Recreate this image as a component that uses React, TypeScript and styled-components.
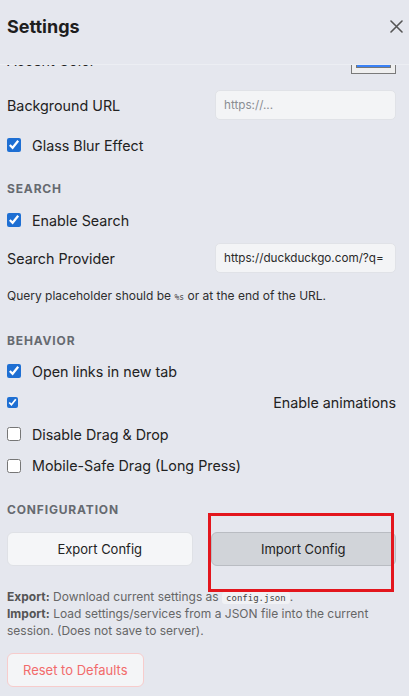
import React, { useLayoutEffect, useRef } from "react";
import styled, { createGlobalStyle, css } from "styled-components";

const GlobalStyle = createGlobalStyle`
  html, body {
    margin: 0;
    padding: 0;
    background: #e5e7ee;
  }
  body {
    font-family: Inter, "Noto Sans", "Liberation Sans", sans-serif;
    color: #222;
  }
  * {
    box-sizing: border-box;
  }
`;

function App() {
  const bodyRef = useRef<HTMLDivElement>(null);
  const accentRef = useRef<HTMLDivElement>(null);

  // panel is scrolled so that the accent row sits half under the header
  useLayoutEffect(() => {
    if (bodyRef.current && accentRef.current) {
      bodyRef.current.scrollTop = accentRef.current.offsetTop + 20;
    }
  }, []);

  return (
    <React.Fragment>
      <GlobalStyle />
      <Panel>
        <Header>
          <Title>Settings</Title>
          <CloseButton aria-label="Close">
            <svg width="13" height="13" viewBox="0 0 13 13">
              <path d="M1 1L12 12M12 1L1 12" stroke="#555" strokeWidth="1.6" strokeLinecap="round" />
            </svg>
          </CloseButton>
        </Header>
        <Body ref={bodyRef}>
          <Section $gap={15}>
            <SectionTitle>Appearance</SectionTitle>
            <FieldRow>
              <Label>Theme</Label>
              <TextInput defaultValue="Auto" readOnly />
            </FieldRow>
            <FieldRow ref={accentRef}>
              <Label>Accent Color</Label>
              <ColorInput type="color" defaultValue="#3b82f6" />
            </FieldRow>
            <FieldRow>
              <Label>Background URL</Label>
              <TextInput placeholder="https://..." />
            </FieldRow>
            <CheckRow>
              <Checkbox type="checkbox" defaultChecked />
              <span>Glass Blur Effect</span>
            </CheckRow>
          </Section>

          <Section $gap={13}>
            <SectionTitle>Search</SectionTitle>
            <CheckRow>
              <Checkbox type="checkbox" defaultChecked />
              <span>Enable Search</span>
            </CheckRow>
            <FieldRow>
              <Label>Search Provider</Label>
              <TextInput defaultValue="https://duckduckgo.com/?q=" />
            </FieldRow>
            <Hint>
              Query placeholder should be <Code $tiny>%s</Code> or at the end of the URL.
            </Hint>
          </Section>

          <Section $gap={12.5} $top={1}>
            <SectionTitle>Behavior</SectionTitle>
            <CheckRow $h={19}>
              <Checkbox type="checkbox" defaultChecked />
              <span>Open links in new tab</span>
            </CheckRow>
            <CheckRow $h={19} $spread>
              <Checkbox type="checkbox" defaultChecked $small />
              <span>Enable animations</span>
            </CheckRow>
            <CheckRow $h={19}>
              <Checkbox type="checkbox" />
              <span>Disable Drag &amp; Drop</span>
            </CheckRow>
            <CheckRow $h={19}>
              <Checkbox type="checkbox" />
              <span>Mobile-Safe Drag (Long Press)</span>
            </CheckRow>
          </Section>

          <Section $top={1}>
            <SectionTitle>Configuration</SectionTitle>
            <ButtonGrid>
              <Button>Export Config</Button>
              <Button $pressed>Import Config</Button>
            </ButtonGrid>
            <ConfigNote>
              <strong>Export:</strong> Download current settings as <Code>config.json</Code>.
              <br />
              <strong>Import:</strong> Load settings/services from a JSON file into the current
              session. (Does not save to server).
            </ConfigNote>
            <div>
              <Button $danger>Reset to Defaults</Button>
            </div>
          </Section>
        </Body>
      </Panel>
      <Highlight />
    </React.Fragment>
  );
}

export default App;

const Panel = styled.div`
  width: 409px;
  height: 696px;
  display: flex;
  flex-direction: column;
  background: #e5e7ee;
`;

const Header = styled.div`
  height: 65px;
  flex-shrink: 0;
  display: flex;
  align-items: flex-start;
  justify-content: space-between;
  padding: 17px 6px 0 7px;
  border-bottom: 1px solid #eceef3;
`;

const Title = styled.h2`
  margin: 0;
  font-size: 18px;
  line-height: 20px;
  font-weight: 700;
  color: #1e1e1e;
`;

const CloseButton = styled.button`
  border: none;
  background: transparent;
  padding: 0;
  width: 13px;
  height: 13px;
  margin-top: 3px;
  display: flex;
  cursor: pointer;
`;

const Body = styled.div`
  position: relative;
  flex: 1;
  overflow: hidden;
  padding: 16px 13px 30px 7px;
  display: flex;
  flex-direction: column;
  gap: 26px;
`;

const Section = styled.div<{ $gap?: number; $top?: number }>`
  display: flex;
  flex-direction: column;
  gap: ${(p) => p.$gap ?? 14}px;
  margin-top: ${(p) => p.$top ?? 0}px;
`;

const SectionTitle = styled.div`
  font-size: 12px;
  line-height: 16px;
  font-weight: 700;
  letter-spacing: 0.07em;
  text-transform: uppercase;
  color: #666a70;
`;

const FieldRow = styled.div`
  height: 30px;
  display: flex;
  align-items: center;
  justify-content: space-between;
`;

const Label = styled.span`
  font-size: 14.3px;
  color: #222;
`;

const TextInput = styled.input`
  width: 181px;
  height: 30px;
  padding: 0 8px;
  border: 1px solid #e0e2e7;
  border-radius: 5px;
  background: #f3f4f6;
  font-family: inherit;
  font-size: 11.7px;
  color: #2a2a2a;
  outline: none;

  &::placeholder {
    color: #8a8d93;
  }
`;

const ColorInput = styled.input`
  align-self: flex-end;
  width: 45px;
  height: 27px;
  padding: 1px 2px;
  border: 1px solid #7a7a7a;
  border-radius: 0;
  background: #efefef;
  margin: 0 0 1px 0;
`;

const CheckRow = styled.label<{ $spread?: boolean; $h?: number }>`
  height: ${(p) => p.$h ?? 20}px;
  display: flex;
  align-items: center;
  gap: 11px;
  font-size: 14.3px;
  color: #222;
  ${(p) =>
    p.$spread &&
    css`
      justify-content: space-between;
    `}
`;

const Checkbox = styled.input<{ $small?: boolean }>`
  margin: 0;
  width: ${(p) => (p.$small ? 11 : 14)}px;
  height: ${(p) => (p.$small ? 11 : 14)}px;
  accent-color: #1e6fd3;
  flex-shrink: 0;
`;

const Hint = styled.p`
  margin: 0;
  font-size: 12px;
  line-height: 20px;
  color: #2e2e2e;
`;

const Code = styled.code<{ $tiny?: boolean }>`
  font-family: "DejaVu Sans Mono", "Liberation Mono", monospace;
  font-size: ${(p) => (p.$tiny ? 8 : 9)}px;
  line-height: 1;
  padding: 1px 4px;
  border-radius: 3px;
  background: ${(p) => (p.$tiny ? "transparent" : "#f1f2f5")};
  color: #444;
  ${(p) =>
    p.$tiny &&
    css`
      padding: 0;
    `}
`;

const ButtonGrid = styled.div`
  display: grid;
  grid-template-columns: 1fr 1fr;
  gap: 18px;
`;

const Button = styled.button<{ $pressed?: boolean; $danger?: boolean }>`
  height: 34px;
  padding: 0 15px;
  border-radius: 6px;
  border: 1px solid #dfe1e6;
  background: #f5f6f8;
  font-family: inherit;
  font-size: 13px;
  color: #222;
  cursor: pointer;

  ${(p) =>
    p.$pressed &&
    css`
      background: #d1d4d9;
      border-color: #b9bcc2;
    `}

  ${(p) =>
    p.$danger &&
    css`
      color: #f26b6b;
      border-color: #f7cccc;
      background: #f4f5f7;
    `}
`;

const ConfigNote = styled.p`
  margin: 8px 0 0;
  font-size: 12px;
  line-height: 17px;
  color: #666;

  strong {
    color: #555;
    font-weight: 700;
  }
`;

const Highlight = styled.div`
  position: absolute;
  left: 208px;
  top: 513px;
  width: 186px;
  height: 79px;
  border: 3px solid #e3161d;
  pointer-events: none;
`;
